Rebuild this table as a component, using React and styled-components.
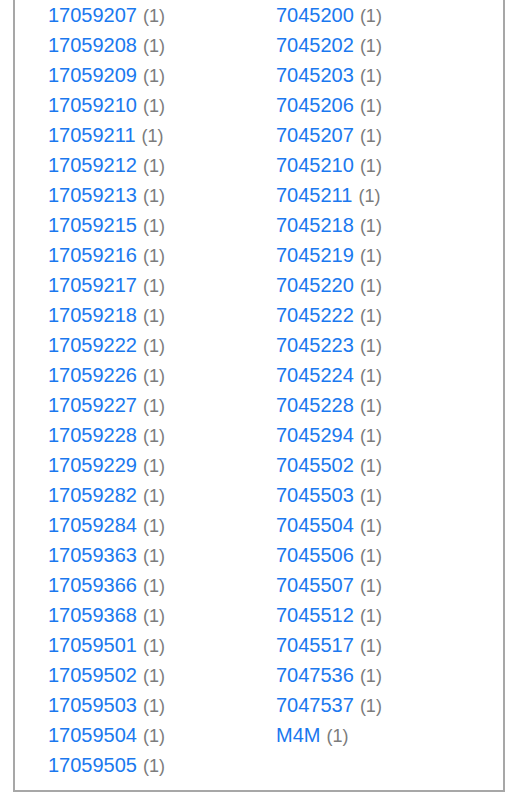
import styled, { createGlobalStyle } from 'styled-components';

const GlobalStyle = createGlobalStyle`
  body {
    margin: 0;
    background: #fff;
    font-family: "Liberation Sans", Arial, sans-serif;
  }
`;

const Box = styled.div`
  margin: 0 11px 0 13px;
  border: 2px solid #a7a7a7;
  border-top: none;
  padding-bottom: 10px;
`;

const List = styled.ul`
  list-style: none;
  margin: 0;
  padding: 0 0 0 33px;
  display: grid;
  grid-template-columns: 228px 1fr;
  grid-template-rows: repeat(${(p) => p.rows}, 30px);
  grid-auto-flow: column;
`;

const Item = styled.li`
  line-height: 30px;
  white-space: nowrap;
`;

const Link = styled.a`
  color: #1a78ef;
  font-size: 20px;
  text-decoration: none;
`;

const Count = styled.span`
  color: #7c7c7c;
  font-size: 18px;
  margin-left: 6px;
`;

const codes = [
  '17059207', '17059208', '17059209', '17059210', '17059211', '17059212',
  '17059213', '17059215', '17059216', '17059217', '17059218', '17059222',
  '17059226', '17059227', '17059228', '17059229', '17059282', '17059284',
  '17059363', '17059366', '17059368', '17059501', '17059502', '17059503',
  '17059504', '17059505',
  '7045200', '7045202', '7045203', '7045206', '7045207', '7045210',
  '7045211', '7045218', '7045219', '7045220', '7045222', '7045223',
  '7045224', '7045228', '7045294', '7045502', '7045503', '7045504',
  '7045506', '7045507', '7045512', '7045517', '7047536', '7047537', 'M4M',
];

export default function App() {
  const rows = Math.ceil(codes.length / 2);

  return <>
    <GlobalStyle />
    <Box>
      <List rows={rows}>
        {codes.map((code) => (
          <Item key={code}>
            <Link href="#">{code}</Link>
            <Count>(1)</Count>
          </Item>
        ))}
      </List>
    </Box>
  </>;
}
